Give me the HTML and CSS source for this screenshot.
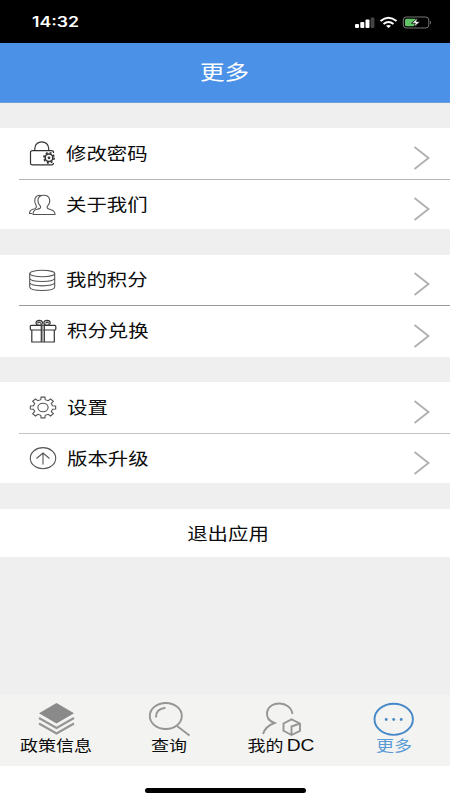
FILE: index.html
```html
<!DOCTYPE html>
<html lang="zh-CN">
<head>
<meta charset="utf-8">
<title>更多</title>
<link rel="stylesheet" href="styles.css">
</head>
<body>
<svg class="defs" width="0" height="0" aria-hidden="true">
  <symbol id="chevron" viewBox="0 0 18 26"><path d="M2.500 2 16.500 13 2.500 24"/></symbol>
  <symbol id="gear" viewBox="-11.5 -11.5 23 23" preserveAspectRatio="none">
    <path vector-effect="non-scaling-stroke" d="M-1.8-7.8-1.6-10.4H1.6L1.8-7.8 4.2-6.8 6.2-8.5 8.5-6.2 6.8-4.2 7.8-1.8 10.4-1.6V1.6L7.8 1.8 6.8 4.2 8.5 6.2 6.2 8.5 4.2 6.8 1.8 7.8 1.6 10.4H-1.6L-1.8 7.8-4.2 6.8-6.2 8.5-8.5 6.2-6.8 4.2-7.8 1.8-10.4 1.6V-1.6L-7.8-1.8-6.8-4.2-8.5-6.2-6.2-8.5-4.2-6.8Z"/>
    <circle vector-effect="non-scaling-stroke" r="4.200"/>
  </symbol>
</svg>
<div class="screen">
  <div class="status">
    <span class="time">14:32</span>
    <svg class="signals" width="78" height="14" viewBox="0 0 78 14">
      <g fill="#fff"><rect x="1" y="9" width="4" height="4" rx="1"/><rect x="6.3" y="7" width="4" height="6" rx="1"/><rect x="11.500" y="4.500" width="4" height="8.500" rx="1"/></g>
      <rect x="16.600" y="2.500" width="3.800" height="10.500" rx="1" fill="#444"/>
      <g fill="none" stroke="#fff" stroke-width="2"><path d="M26.500 6Q34.500-.5 42.500 6M29.500 9Q34.500 5 39.500 9"/></g>
      <path d="M32 10.800Q34.500 9 37 10.800L34.500 13Z" fill="#fff"/>
      <rect x="49.300" y="2" width="25.500" height="11" rx="3" fill="none" stroke="#777"/>
      <rect x="51" y="3.700" width="11.500" height="7.600" rx="1.500" fill="#62c466"/>
      <path d="M76 5.500Q78 7.500 76 9.500Z" fill="#777"/>
      <path d="M64 2.800 57.500 8.200H61.300L59.800 12.200 66.300 6.600H62.500Z" fill="#fff" stroke="#000" stroke-width=".8"/>
    </svg>
  </div>
  <header class="title"><span class="wide">更多</span></header>

  <main class="content">
    <section class="card">
      <div class="row">
        <svg class="icon dark" viewBox="0 0 28 27">
          <path d="M25.500 13V12.500Q25.500 10.700 23.500 10.700H4.500Q2.500 10.700 2.500 12.500V23Q2.500 24.800 4.500 24.800H23.500Q25.500 24.800 25.500 23M6.800 10.500V8.500C7 -.3 20.500 -.3 20.700 8.500V10.500"/>
          <circle cx="21" cy="17.800" r="3.800" stroke-width="1.500"/><circle cx="21" cy="17.800" r="5.100" stroke-width="1.600" stroke-dasharray="2 2.006"/><circle cx="21" cy="17.800" r=".8"/>
        </svg>
        <span class="wide label">修改密码</span>
        <svg class="arrow"><use href="#chevron"/></svg>
      </div>
      <div class="row">
        <svg class="icon" viewBox="0 0 28 27">
          <path d="M5 23.500C5 20.500 6 19 9 18.300 12 17.700 13 17 12.500 15.300 8.500 11 9 4.200 15.800 4.200 22.500 4.200 23.300 11 19.300 15.300 18.500 17.500 20 17.900 23 18.700 26 19.500 27 21 27 23.500ZM12.500 4.200C6 4.200 5.500 10.700 8.200 14.700 9.200 16.700 7 17.800 5 18.300 2.500 19 1.500 20.500 1.500 22.500H4"/>
        </svg>
        <span class="wide label">关于我们</span>
        <svg class="arrow"><use href="#chevron"/></svg>
      </div>
    </section>

    <section class="card points">
      <div class="row">
        <svg class="icon" viewBox="0 0 28 27">
          <ellipse cx="14.200" cy="6.500" rx="12.500" ry="3.200"/>
          <path d="M1.700 6.500V20C2 24.700 26.400 24.700 26.700 20V6.500M1.700 11.300C3 15.500 25.400 15.500 26.700 11.300M1.700 15.700C3 19.900 25.400 19.900 26.700 15.700"/>
        </svg>
        <span class="wide label">我的积分</span>
        <svg class="arrow"><use href="#chevron"/></svg>
      </div>
      <div class="row">
        <svg class="icon dark" viewBox="0 0 28 27">
          <rect x="2.300" y="7.300" width="25.500" height="4.700" rx="1"/><path d="M3.800 12V24H26.300V12M13.300 7.500V24M16.300 7.500V24"/><path d="M14.800 7.500V24" stroke="#888"/>
          <ellipse cx="11.200" cy="4.800" rx="3.200" ry="2.500"/><ellipse cx="19" cy="4.800" rx="3.200" ry="2.500"/><path d="M9.500 5.300Q11 3 13 5.500M17.500 5.500Q19 3 20.700 5.300"/>
        </svg>
        <span class="wide label">积分兑换</span>
        <svg class="arrow"><use href="#chevron"/></svg>
      </div>
    </section>

    <section class="card system">
      <div class="row">
        <svg class="icon" viewBox="0 0 28 27"><use href="#gear" x="1" y="2" width="28" height="23"/></svg>
        <span class="wide label">设置</span>
        <svg class="arrow"><use href="#chevron"/></svg>
      </div>
      <div class="row">
        <svg class="icon" viewBox="0 0 28 27">
          <ellipse cx="15" cy="13.200" rx="12.700" ry="10.600"/><path d="M15 19.500V8M8.500 13.500 15 8 21.500 13.500"/>
        </svg>
        <span class="wide label">版本升级</span>
        <svg class="arrow"><use href="#chevron"/></svg>
      </div>
    </section>

    <section class="card exit"><span class="wide">退出应用</span></section>
  </main>

  <nav class="tabs">
    <div class="tab">
      <svg width="44" height="36" viewBox="0 0 44 36">
        <path d="M22.500 2 40 12.300 22.500 22.500 5 12.300Z" fill="#8a8a8a" stroke="none"/>
        <path d="M5 17 22.500 27 40 17M5 22.500 22.500 32.500 40 22.500" stroke-width="2.200"/>
      </svg>
      <span class="wide">政策信息</span>
    </div>
    <div class="tab">
      <svg width="44" height="36" viewBox="0 0 44 36">
        <ellipse cx="18.800" cy="15" rx="16" ry="13"/><path d="M9 16.500Q8.500 8 18.500 6.800M30 25 42.500 34.500"/>
      </svg>
      <span class="wide">查询</span>
    </div>
    <div class="tab">
      <svg width="44" height="36" viewBox="0 0 44 36">
        <path d="M33.500 13C31.500-.5 10-1 8 11.500 7.500 17 10.500 20.300 15.500 22 10 24 5.500 28 4 33"/>
        <path d="M32.500 18.300 41 22.500V29.800L32.500 34 24.500 29.800V22.500ZM41 22.500 32.500 25.500V34"/>
      </svg>
      <span class="wide mine">我的 <span class="latin">DC</span></span>
    </div>
    <div class="tab active">
      <svg width="44" height="36" viewBox="0 0 44 36">
        <ellipse cx="21.700" cy="18.300" rx="19.200" ry="15.600"/>
        <g class="dots"><circle cx="14.200" cy="18.500" r="1.400"/><circle cx="21.700" cy="18.500" r="1.400"/><circle cx="29.200" cy="18.500" r="1.400"/></g>
      </svg>
      <span class="wide">更多</span>
    </div>
  </nav>
  <div class="home"><div class="home-bar"></div></div>
</div>
</body>
</html>
```
FILE: styles.css
```css
* { box-sizing: border-box; }

body {
  margin: 0;
  background: #fff;
  color: #0c0c0c;
  font-family: "Liberation Sans", "Noto Sans CJK SC", sans-serif;
}

svg { display: block; fill: none; flex: none; }
.defs { position: absolute; }

.screen {
  display: flex;
  flex-direction: column;
  width: 450px;
  height: 800px;
  overflow: hidden;
}

/* Labels use a horizontally expanded face */
.wide {
  display: inline-block;
  white-space: nowrap;
  transform: scaleX(1.2);
  transform-origin: center;
}

.status {
  display: flex;
  align-items: center;
  justify-content: space-between;
  height: 43px;
  padding: 0 18px 0 32px;
  background: #000;
}

.time {
  padding-top: 1px;
  color: #fff;
  font: 600 14px/20px Inter, sans-serif;
  transform: scaleX(1.26);
  transform-origin: left;
}

.title {
  height: 60px;
  padding-right: 1px;
  border-bottom: 1px solid #6d9fda;
  background: #4a91e7;
  color: #fff;
  font-size: 20.500px;
  line-height: 59px;
  text-align: center;
}

.content {
  flex: 1;
  display: flex;
  flex-direction: column;
  gap: 25px;
  padding-top: 25px;
  background: #efefef;
}

.card { height: 102px; background: #fff; }
.card:first-child { height: 101px; margin-bottom: 1px; }
.card.system { height: 101px; margin-bottom: 1px; }

.row {
  display: flex;
  align-items: center;
  height: 51px;
  padding: 0 20px 0 28px;
}

.row + .row {
  height: 51px;
  margin-left: 19px;
  padding-left: 9px;
  border-top: 1px solid #aaa;
}

.card:first-child .row + .row { height: 50px; border-top-color: #b5b5b5; }
.system .row + .row { height: 50px; border-top-color: #c4c4c4; }
.points .row:first-child { height: 50px; }
.points .row + .row { height: 52px; border-top-color: #999; }

.icon {
  width: 28px;
  height: 27px;
  overflow: visible;
  stroke: #555;
  stroke-width: 1.1;
}
.icon.dark { stroke: #333; stroke-width: 1.2; }

.label {
  flex: 1;
  margin-left: 10px;
  padding-top: 2px;
  transform-origin: left;
}
.points .row + .row .label { padding-top: 1px; }
.points .row + .row .label,
.system .label { margin-left: 10.500px; margin-right: -.5px; }

.label, .exit { font-size: 17px; line-height: 24px; }

.arrow {
  width: 18px;
  height: 26px;
  margin-top: 8px;
  stroke: #b0b0b0;
  stroke-width: 1.9;
}

.card.exit {
  height: 48px;
  line-height: 52px;
  text-align: center;
  padding-left: 6px;
}

.tabs {
  display: grid;
  grid-template-columns: repeat(4, 112.5px);
  height: 71px;
  padding-top: 6px;
  background: #f3f3f1;
}

.tab {
  display: flex;
  flex-direction: column;
  align-items: center;
  font-size: 15px;
  line-height: 26px;
  stroke: #969696;
  stroke-width: 1.9;
}

.tab .wide { margin-top: -4px; stroke: none; }
.mine { word-spacing: -1.500px; }
.latin { font-size: 16px; }
.active { color: #5a9bd5; stroke: #4688c8; }
.dots { fill: #4688c8; stroke: none; }

.home {
  display: flex;
  justify-content: center;
  height: 34px;
  padding-top: 22px;
  background: #fff;
}

.home-bar {
  width: 161px;
  height: 5px;
  border-radius: 3px;
  background: #000;
}
```
